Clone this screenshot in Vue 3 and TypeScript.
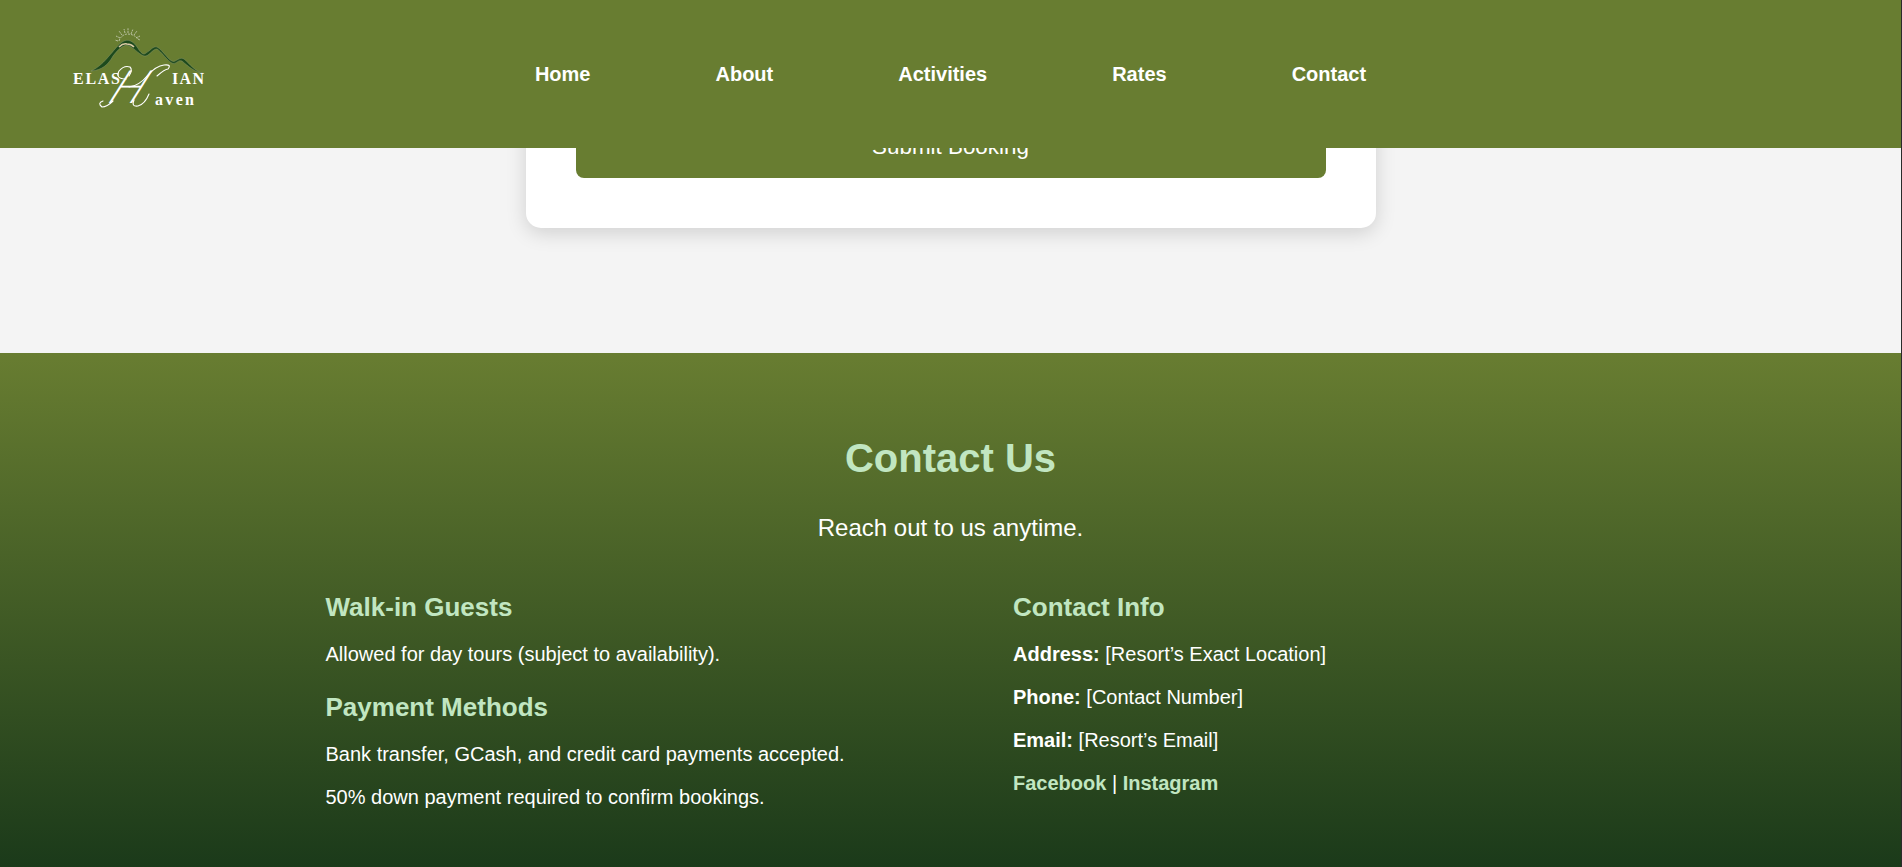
<script setup lang="ts">
interface ContactLine {
  label: string
  value: string
}

const navItems: string[] = ['Home', 'About', 'Activities', 'Rates', 'Contact']
const contactLines: ContactLine[] = [
  { label: 'Address:', value: '[Resort’s Exact Location]' },
  { label: 'Phone:', value: '[Contact Number]' },
  { label: 'Email:', value: '[Resort’s Email]' },
]
</script>

<template>
  <div class="page">
    <header class="header">
      <svg class="logo" viewBox="60 15 160 105" role="img" aria-label="Elashian Haven">
        <g class="sun">
          <path d="M119 41Q121 35 127 34Q134 34 138 39" stroke-dasharray="2 1" />
          <path d="M120 38l-4-2M122 35l-3-4M125 33l-1-4M128 33v-5M131 34l2-5M134 35l3-4M136 38l4-2M118 41l-3-1M138 39l2 1" stroke-dasharray="2 .7" />
        </g>
        <path class="ridge" d="M91 71C98 68 105 61 109 56C113 52 118 44 124 41C131 38 136 45 139 50C142 54 144 55 146 53C150 51 153 46 157 47C163 50 169 62 174 61.500C178 60 180 57 184 59C190 64 194 71 204 73.500C194 72 188 66 182 61C178 59.500 177 63.500 173 63.500C168 62 161 51 157 49C152 49 149 57 144 56C138 54 133 46 126 45C120 47 116 52 113 56C108 65 102 70 91 71Z" />
        <path class="ridge-light" d="M119 47Q123 43 127 44Q131 44 134 47" />
        <g class="letters">
          <text x="73" y="84" textLength="47">ELAS</text>
          <text x="172" y="84" textLength="32">IAN</text>
          <text x="155" y="105" textLength="39">aven</text>
        </g>
        <text class="initial" transform="translate(106 103) skewX(-27)">H</text>
        <path class="flourish" d="M126 79Q115 79 119 71Q124 65 130 67Q133 70 129 76M113 101Q107 107 102 107Q97 103 103 101M157 76Q165 69 168 69Q172 64 164 65Q156 66 148 75Q139 86 129 87M134 100Q131 107 138 106Q145 104 149 94" />
      </svg>
      <nav class="nav">
        <a v-for="item in navItems" :key="item" class="nav-link">{{ item }}</a>
      </nav>
    </header>

    <section class="booking">
      <form class="card" @submit.prevent>
        <button class="submit" type="submit">Submit Booking</button>
      </form>
    </section>

    <footer class="contact">
      <h2>Contact Us</h2>
      <p class="lead">Reach out to us anytime.</p>
      <div class="columns">
        <div>
          <h3>Walk-in Guests</h3>
          <p>Allowed for day tours (subject to availability).</p>
          <h3>Payment Methods</h3>
          <p>Bank transfer, GCash, and credit card payments accepted.</p>
          <p>50% down payment required to confirm bookings.</p>
        </div>
        <div>
          <h3>Contact Info</h3>
          <p v-for="line in contactLines" :key="line.label">
            <strong>{{ line.label }}</strong> {{ line.value }}
          </p>
          <p><a>Facebook</a> | <a>Instagram</a></p>
        </div>
      </div>
    </footer>
  </div>
</template>

<style>
body {
  margin: 0;
  background: #2b2b2b;
}
</style>

<style scoped>
.page {
  box-sizing: border-box;
  width: 1901px;
  height: 867px;
  overflow: hidden;
  display: flex;
  flex-direction: column;
  background: #f4f4f4;
  font-family: "Liberation Sans", Arial, sans-serif;
  color: #fff;
}
.header {
  box-sizing: border-box;
  flex: none;
  height: 148px;
  padding: 15px 60px 0;
  display: grid;
  grid-template-columns: 160px 1fr 160px;
  background: #687d31;
  z-index: 1;
}
.logo {
  width: 160px;
  height: 105px;
}
.sun {
  fill: none;
  stroke: #c3c9ae;
  stroke-width: 0.9;
}
.ridge {
  fill: #1d4a1c;
  stroke: #94a07c;
  stroke-width: 0.4;
}
.ridge-light {
  fill: none;
  stroke: #dcc9a4;
  stroke-width: 1.6;
}
.letters {
  font: bold 16px "Liberation Serif", serif;
  fill: #fff;
}
.initial {
  font: italic 300 46px Lato, "Liberation Sans", sans-serif;
  fill: #fff;
}
.flourish {
  fill: none;
  stroke: #fff;
  stroke-width: 1.1;
  stroke-linecap: round;
}
.nav {
  display: flex;
  justify-content: center;
  gap: 125px;
  padding-top: 48px;
}
.nav-link {
  font-size: 20px;
  line-height: 23px;
  font-weight: bold;
}
.booking {
  flex: none;
  height: 205px;
  display: flex;
  justify-content: center;
  align-items: flex-start;
}
.card {
  box-sizing: border-box;
  width: 850px;
  height: 120px;
  margin-top: -40px;
  padding: 0 50px 50px;
  display: flex;
  background: #fff;
  border-radius: 15px;
  box-shadow: 0 5px 20px rgba(0, 0, 0, 0.15);
}
.submit {
  flex: 1;
  border: 0;
  border-radius: 8px;
  padding: 8px 0 0;
  background: #687d31;
  color: #fff;
  font: 22.4px "Liberation Sans", Arial, sans-serif;
}
.contact {
  flex: 1;
  background: linear-gradient(#687d31, #1b3a1a);
}
h2 {
  margin: 82px 0 0;
  font-size: 40px;
  line-height: 46px;
  text-align: center;
  color: #c1e6c1;
}
.lead {
  margin: 33px 0 0;
  font-size: 24px;
  line-height: 27px;
  text-align: center;
}
.columns {
  width: 1250px;
  margin: 51px auto 0;
  display: grid;
  grid-template-columns: 1fr 1fr;
  gap: 125px;
}
h3 {
  margin: 26px 0 21px;
  font-size: 26px;
  line-height: 30px;
  color: #c1e6c1;
}
h3:first-child {
  margin-top: 0;
}
.columns p {
  margin: 20px 0;
  font-size: 20px;
  line-height: 23px;
}
.columns a {
  font-weight: bold;
  color: #c1e6c1;
}
</style>
